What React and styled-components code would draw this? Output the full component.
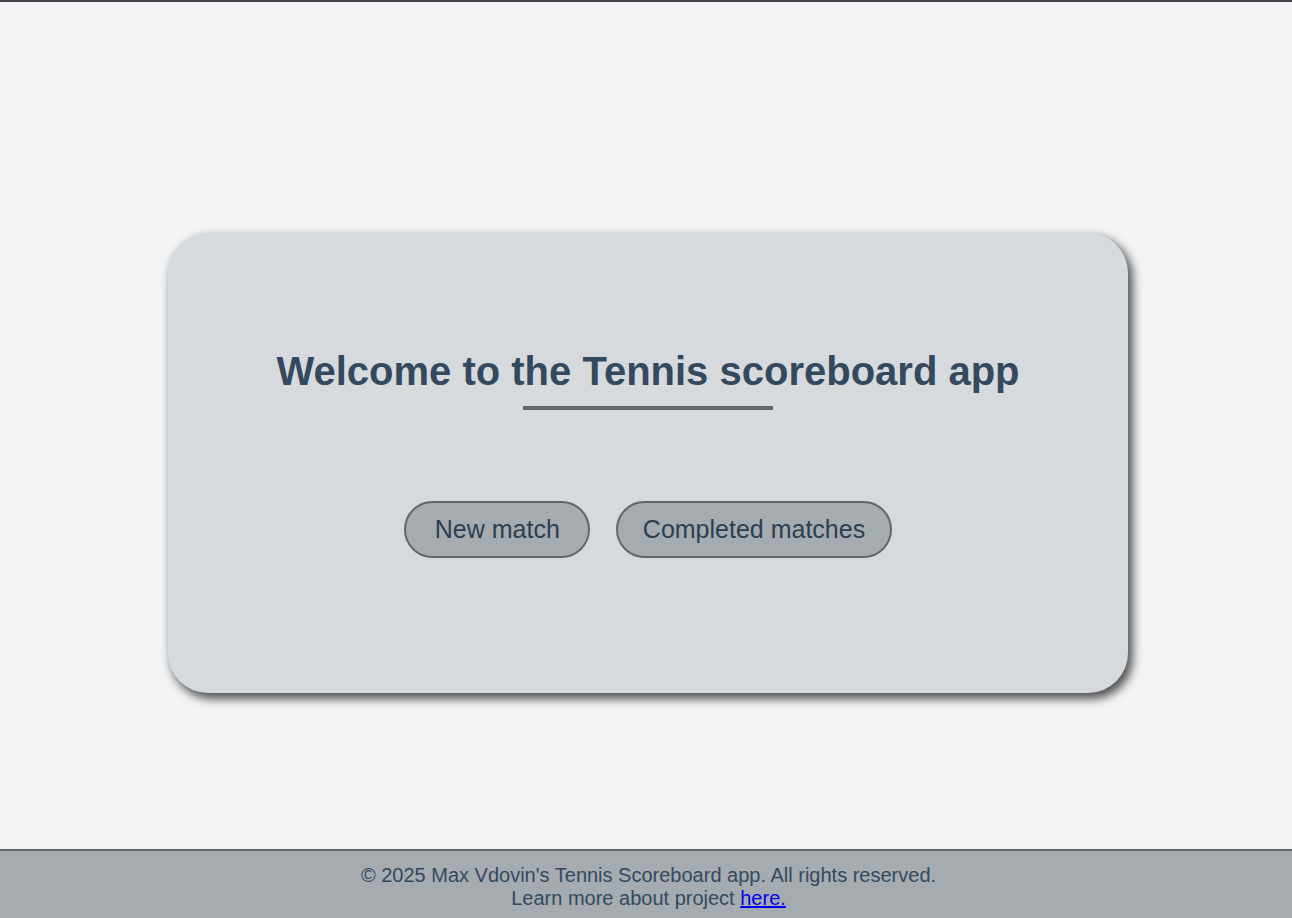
import React from "react";
import styled, { createGlobalStyle } from "styled-components";

const Global = createGlobalStyle`
  html, body { margin: 0; padding: 0; }
  body {
    background: #f2f3f5;
    font-family: "Liberation Sans", Arial, sans-serif;
    color: #34495e;
  }
`;

const Page = styled.div`
  min-height: 918px;
  display: flex;
  flex-direction: column;
  border-top: 2px solid #43454a;
  box-sizing: border-box;
`;

const Main = styled.main`
  flex: 1;
  display: flex;
  justify-content: center;
  align-items: flex-start;
  padding: 231px 0 0 4px;
`;

const Card = styled.section`
  width: 960px;
  height: 460px;
  box-sizing: border-box;
  background: #d7dadd;
  border-radius: 40px;
  box-shadow: 4px 5px 10px 1px rgba(0, 0, 0, 0.65);
  display: flex;
  flex-direction: column;
  align-items: center;
  padding-top: 115px;
`;

const Title = styled.h1`
  margin: 0;
  font-size: 40px;
  line-height: 46px;
  font-weight: 700;
  color: #34495e;
  text-align: center;
`;

const Underline = styled.div`
  width: 250px;
  height: 4px;
  background: #63676b;
  margin-top: 12px;
`;

const Actions = styled.div`
  display: flex;
  gap: 26px;
  margin-top: 91px;
`;

const Button = styled.a`
  display: inline-block;
  box-sizing: border-box;
  min-width: 186px;
  height: 57px;
  padding: 0 24.5px;
  border: 2px solid #636669;
  border-radius: 999px;
  background: #a6abaf;
  color: #2c3e50;
  font-size: 25px;
  line-height: 53px;
  text-align: center;
  text-decoration: none;
  cursor: pointer;
`;

const Footer = styled.footer`
  background: #a6abb0;
  border-top: 2px solid #63676b;
  text-align: center;
  font-size: 20px;
  line-height: 23px;
  color: #34495e;
  padding: 13px 0 8px 5px;
`;

const FooterLine = styled.div``;

const Link = styled.a`
  color: #0000ee;
  text-decoration: underline;
`;

export default function App() {
  return (
    <>
      <Global />
      <Page>
        <Main>
          <Card>
            <Title>Welcome to the Tennis scoreboard app</Title>
            <Underline />
            <Actions>
              <Button>New match</Button>
              <Button>Completed matches</Button>
            </Actions>
          </Card>
        </Main>
        <Footer>
          <FooterLine>© 2025 Max Vdovin's Tennis Scoreboard app. All rights reserved.</FooterLine>
          <FooterLine>
            Learn more about project <Link href="#">here.</Link>
          </FooterLine>
        </Footer>
      </Page>
    </>
  );
}
